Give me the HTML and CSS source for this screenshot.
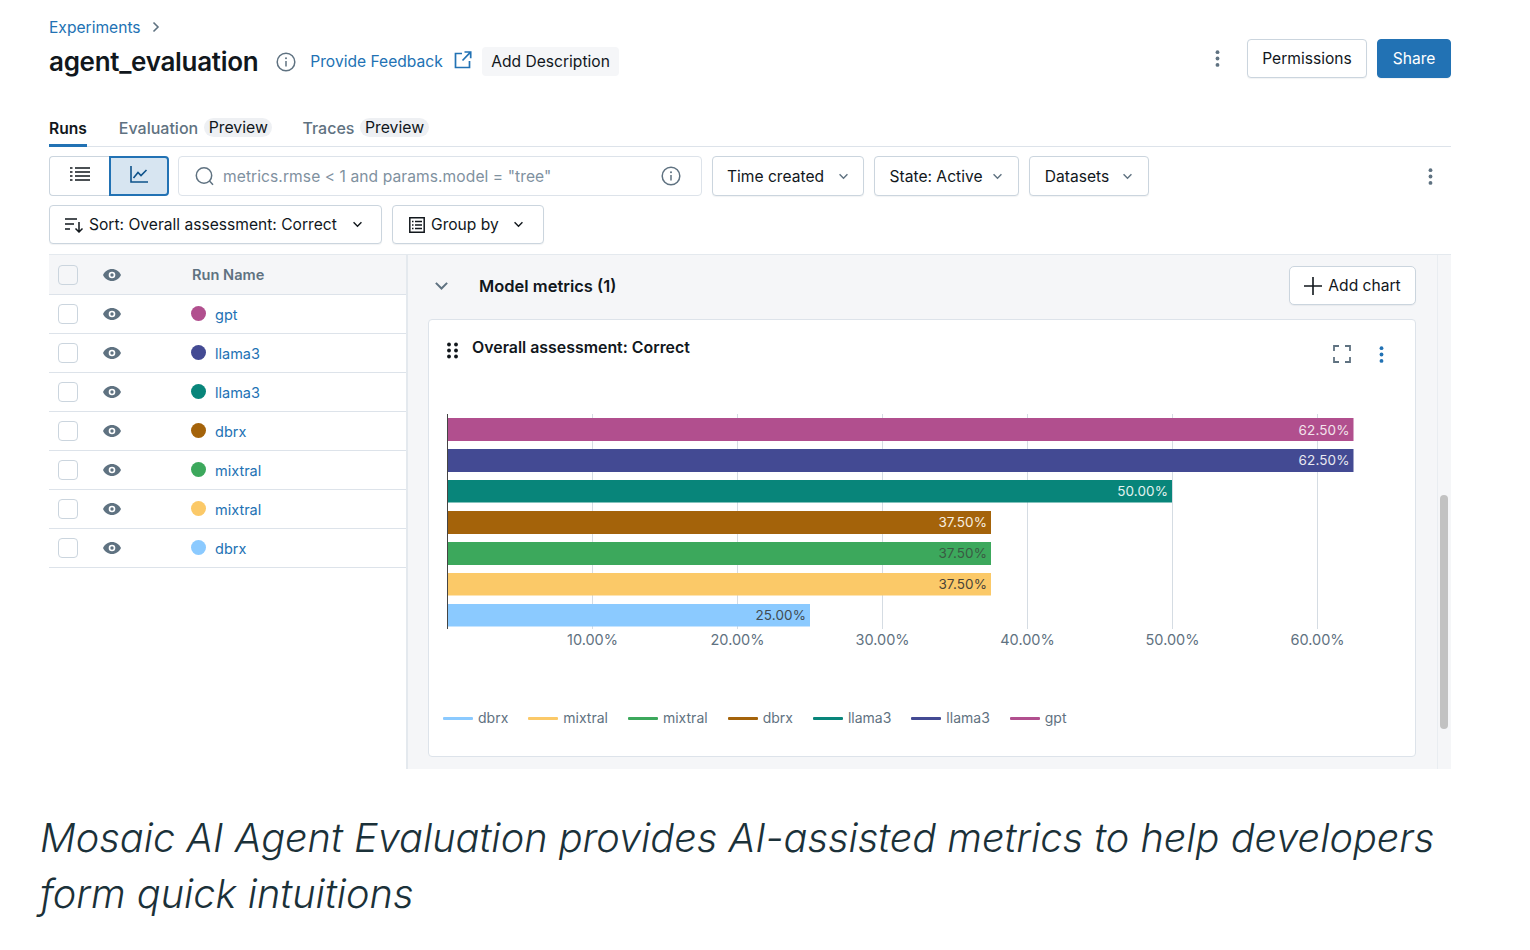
FILE: index.html
```html
<!DOCTYPE html>
<html lang="en">
<head>
<meta charset="utf-8">
<title>agent_evaluation</title>
<link rel="stylesheet" href="styles.css">
</head>
<body>
<svg class="defs" width="0" height="0" aria-hidden="true">
  <symbol id="eye" viewBox="0 0 18 12"><path d="M9 0C5 0 1.700 2.400 0 6c1.700 3.600 5 6 9 6s7.300-2.400 9-6c-1.700-3.600-5-6-9-6z" fill="#5f7281"/><circle cx="9" cy="6" r="3.300" fill="#fff"/><circle cx="9" cy="6" r="1.700" fill="#5f7281"/></symbol>
  <symbol id="chev" viewBox="0 0 12 8"><path d="M1.500 1.500 6 6l4.500-4.500" fill="none" stroke="currentColor" stroke-width="1.600"/></symbol>
  <symbol id="kebab" viewBox="0 0 4 16"><circle cx="2" cy="2" r="1.800"/><circle cx="2" cy="8" r="1.800"/><circle cx="2" cy="14" r="1.800"/></symbol>
  <symbol id="info" viewBox="0 0 20 20"><circle cx="10" cy="10" r="8.800" fill="none" stroke="#5f7281" stroke-width="1.500"/><circle cx="10" cy="6.200" r="1" fill="#5f7281"/><path d="M10 9v5.500" stroke="#5f7281" stroke-width="1.500"/></symbol>
</svg>

<div class="app">
  <nav class="crumbs"><a class="link">Experiments</a><svg class="crumb-chev" width="8" height="12" viewBox="0 0 8 12"><path d="M1.500 1.500 6 6l-4.500 4.500" fill="none" stroke="#5f7281" stroke-width="1.600"/></svg></nav>

  <header class="head">
    <h1 class="title">agent_evaluation</h1>
    <svg class="head-info" width="20" height="20"><use href="#info"/></svg>
    <a class="link feedback">Provide Feedback</a>
    <svg class="ext" width="18" height="18" viewBox="0 0 18 18"><path d="M8 2.500H1.500v14h14V10M10.500 1h6.200v6.200M16.500 1.200 8.500 9.500" fill="none" stroke="#2272b4" stroke-width="1.700"/></svg>
    <span class="add-desc">Add Description</span>
    <svg class="head-kebab" width="5" height="17" fill="#5f7281"><use href="#kebab"/></svg>
    <button class="btn perm">Permissions</button>
    <button class="btn share">Share</button>
  </header>

  <div class="tabs">
    <span class="tab active">Runs</span>
    <span class="tab">Evaluation <em class="pill">Preview</em></span>
    <span class="tab">Traces <em class="pill">Preview</em></span>
  </div>

  <div class="toolbar">
    <div class="toggle">
      <span class="toggle-item"><svg width="20" height="14" viewBox="0 0 20 14"><path d="M0 1h2.500M5 1h15M0 5h2.500M5 5h15M0 9h2.500M5 9h15M0 13h2.500M5 13h15" stroke="#11171c" stroke-width="1.500"/></svg></span>
      <span class="toggle-item on"><svg width="18" height="17" viewBox="0 0 18 17"><path d="M1 0v16h17M3.500 12 8 6.500l3 3L16.500 4" fill="none" stroke="#0e538b" stroke-width="1.600"/></svg></span>
    </div>
    <div class="search">
      <svg width="20" height="20" viewBox="0 0 20 20"><circle cx="9" cy="9.500" r="7.700" fill="none" stroke="#5f7281" stroke-width="1.500"/><path d="m14.500 15 3.500 3.800" stroke="#5f7281" stroke-width="1.500"/></svg>
      <span class="placeholder">metrics.rmse &lt; 1 and params.model = "tree"</span>
      <svg width="20" height="20"><use href="#info"/></svg>
    </div>
    <button class="btn select time">Time created<svg width="11" height="7" class="sel-chev"><use href="#chev"/></svg></button>
    <button class="btn select state">State: Active<svg width="11" height="7" class="sel-chev"><use href="#chev"/></svg></button>
    <button class="btn select data">Datasets<svg width="11" height="7" class="sel-chev"><use href="#chev"/></svg></button>
    <svg class="tool-kebab" width="5" height="17" fill="#5f7281"><use href="#kebab"/></svg>
  </div>

  <div class="toolbar second">
    <button class="btn select sort">
      <svg width="19" height="16" viewBox="0 0 19 16"><path d="M0 2h12M0 7h9M0 12h5M14 5v10M10.500 11.500 14 15l3.500-3.500" fill="none" stroke="#11171c" stroke-width="1.500"/></svg>
      Sort: Overall assessment: Correct<svg width="11" height="7" class="dark-chev"><use href="#chev"/></svg>
    </button>
    <button class="btn select group">
      <svg width="16" height="16" viewBox="0 0 16 16"><path d="M.8.800h14.400v14.400H.8zM3 4.500h1.500M6 4.500h7M3 8h1.500M6 8h7M3 11.500h1.500M6 11.500h7" fill="none" stroke="#11171c" stroke-width="1.500"/></svg>
      Group by<svg width="11" height="7" class="dark-chev"><use href="#chev"/></svg>
    </button>
  </div>

  <main class="main">
    <section class="runs">
      <div class="run-row run-head">
        <span class="check"></span><svg class="eye" width="18" height="12"><use href="#eye"/></svg><span class="run-title">Run Name</span>
      </div>
      <div class="run-row"><span class="check"></span><svg class="eye" width="18" height="12"><use href="#eye"/></svg><span class="dot" style="background:#b14f8e"></span><a class="link run-link">gpt</a></div>
      <div class="run-row"><span class="check"></span><svg class="eye" width="18" height="12"><use href="#eye"/></svg><span class="dot" style="background:#434a93"></span><a class="link run-link">llama3</a></div>
      <div class="run-row"><span class="check"></span><svg class="eye" width="18" height="12"><use href="#eye"/></svg><span class="dot" style="background:#08857a"></span><a class="link run-link">llama3</a></div>
      <div class="run-row"><span class="check"></span><svg class="eye" width="18" height="12"><use href="#eye"/></svg><span class="dot" style="background:#a4630a"></span><a class="link run-link">dbrx</a></div>
      <div class="run-row"><span class="check"></span><svg class="eye" width="18" height="12"><use href="#eye"/></svg><span class="dot" style="background:#3ca85c"></span><a class="link run-link">mixtral</a></div>
      <div class="run-row"><span class="check"></span><svg class="eye" width="18" height="12"><use href="#eye"/></svg><span class="dot" style="background:#fbc968"></span><a class="link run-link">mixtral</a></div>
      <div class="run-row"><span class="check"></span><svg class="eye" width="18" height="12"><use href="#eye"/></svg><span class="dot" style="background:#8bcaff"></span><a class="link run-link">dbrx</a></div>
    </section>

    <section class="charts">
      <div class="charts-body">
        <div class="metrics-head">
          <svg class="metrics-chev" width="15" height="10" viewBox="0 0 12 8"><use href="#chev"/></svg>
          <h2 class="metrics-title">Model metrics (1)</h2>
          <button class="btn add"><svg width="18" height="18" viewBox="0 0 18 18"><path d="M9 0v18M0 9h18" stroke="#11171c" stroke-width="1.600"/></svg>Add chart</button>
        </div>
        <article class="card">
          <div class="card-head">
            <svg class="grip" width="11" height="17" viewBox="0 0 11 17" fill="#11171c"><circle cx="2" cy="2.500" r="1.900"/><circle cx="9" cy="2.500" r="1.900"/><circle cx="2" cy="8.500" r="1.900"/><circle cx="9" cy="8.500" r="1.900"/><circle cx="2" cy="14.500" r="1.900"/><circle cx="9" cy="14.500" r="1.900"/></svg>
            <h3 class="card-title">Overall assessment: Correct</h3>
            <svg class="expand" width="18" height="18" viewBox="0 0 18 18"><path d="M1 6V1h5M12 1h5v5M1 12v5h5M12 17h5v-5" fill="none" stroke="#5f7281" stroke-width="1.800"/></svg>
            <svg class="card-kebab" width="5" height="17" fill="#2272b4"><use href="#kebab"/></svg>
          </div>
          <svg class="chart" width="986" height="250" viewBox="429 405 986 250">
            <g class="grid">
              <path d="M592.500 414v215M737.500 414v215M882.500 414v215M1027.500 414v215M1172.500 414v215M1317.500 414v215"/>
            </g>
            <rect x="448" y="418" width="905.500" height="23" fill="#b14f8e"/>
            <rect x="448" y="449" width="905.500" height="23" fill="#434a93"/>
            <rect x="448" y="480" width="724" height="22.500" fill="#08857a"/>
            <rect x="448" y="511" width="543" height="23" fill="#a4630a"/>
            <rect x="448" y="542" width="543" height="23" fill="#3ca85c"/>
            <rect x="448" y="573" width="543" height="22.500" fill="#fbc968"/>
            <rect x="448" y="604" width="362" height="22.500" fill="#8bcaff"/>
            <path class="axis" d="M447.500 414v215"/>
            <g class="bar-label">
              <text x="1349.500" y="435" fill="#f3e3ec">62.50%</text>
              <text x="1349.500" y="465" fill="#e8e9f2">62.50%</text>
              <text x="1168" y="496" fill="#e3f2f0">50.00%</text>
              <text x="987" y="527" fill="#f8efe0">37.50%</text>
              <text x="987" y="558" fill="#3a5a43">37.50%</text>
              <text x="987" y="589" fill="#4a4438">37.50%</text>
              <text x="806" y="620" fill="#3f4a52">25.00%</text>
            </g>
            <g class="tick">
              <text x="592.500" y="645">10.00%</text>
              <text x="737.500" y="645">20.00%</text>
              <text x="882.500" y="645">30.00%</text>
              <text x="1027.500" y="645">40.00%</text>
              <text x="1172.500" y="645">50.00%</text>
              <text x="1317.500" y="645">60.00%</text>
            </g>
          </svg>
          <ul class="legend">
            <li class="legend-item"><i class="swatch" style="background:#8bcaff"></i>dbrx</li>
            <li class="legend-item"><i class="swatch" style="background:#fbc968"></i>mixtral</li>
            <li class="legend-item"><i class="swatch" style="background:#3ca85c"></i>mixtral</li>
            <li class="legend-item"><i class="swatch" style="background:#a4630a"></i>dbrx</li>
            <li class="legend-item"><i class="swatch" style="background:#08857a"></i>llama3</li>
            <li class="legend-item"><i class="swatch" style="background:#434a93"></i>llama3</li>
            <li class="legend-item"><i class="swatch" style="background:#b14f8e"></i>gpt</li>
          </ul>
        </article>
      </div>
      <div class="scroll"><span class="thumb"></span></div>
    </section>
  </main>
</div>

<p class="caption">Mosaic AI Agent Evaluation provides AI-assisted metrics to help developers form quick intuitions</p>
</body>
</html>
```
FILE: styles.css
```css
* { box-sizing: border-box; }
html, body { margin: 0; padding: 0; }
body { background: #fff; color: #11171c; font-family: Inter, "Liberation Sans", sans-serif; font-size: 15.600px; width: 1530px; height: 950px; overflow: hidden; }
.defs { position: absolute; }
svg { display: block; flex: none; }
.app { margin-left: 49px; width: 1402px; }
.link { color: #2272b4; }

.crumbs { display: flex; align-items: center; height: 18px; margin-top: 18px; gap: 11px; }
.crumb-chev { margin-top: -1px; }

.head { display: flex; align-items: center; height: 40px; margin-top: 6px; }
.title { margin: 0; font-size: 26px; font-weight: 600; letter-spacing: -.3px; line-height: 40px; color: #11171c; }
.head-info { margin-left: 18px; margin-top: -1px; }
.feedback { margin-left: 14px; margin-top: -1px; }
.ext { margin-left: 11px; margin-top: -5px; }
.add-desc { margin-left: 10px; height: 29px; line-height: 29px; padding: 0 9.500px; background: #f5f6f8; border-radius: 4px; margin-top: -2px; }
.head-kebab { margin-left: auto; margin-right: 27px; margin-top: -8px; }

.btn { font: inherit; color: #11171c; background: #fff; border: 1px solid #cbd5de; border-radius: 4px; height: 39px; padding: 0; display: flex; align-items: center; justify-content: center; box-shadow: 0 1px 1px rgba(30, 50, 70, .06); }
.perm { width: 120px; margin-top: -8px; }
.share { width: 74px; margin-left: 10px; margin-top: -8px; background: #2272b4; border-color: #2272b4; color: #fff; }

.tabs { display: flex; align-items: flex-end; height: 40px; margin-top: 25px; gap: 32px; border-bottom: 1px solid #dde3ea; font-size: 16px; }
.tab { display: flex; align-items: center; gap: 6px; height: 28px; padding-bottom: 9px; color: #5f7281; font-weight: 500; }
.tab:last-child { margin-left: -2px; }
.tab.active { color: #11171c; font-weight: 600; font-size: 15.600px; border-bottom: 3px solid #2272b4; margin-bottom: -1px; height: 29px; padding-bottom: 6px; }
.pill { font-style: normal; font-weight: 400; font-size: 15.800px; color: #11171c; background: #eef0f3; border-radius: 10px; padding: 0 4.500px; line-height: 19px; }

.toolbar { display: flex; align-items: center; height: 40px; margin-top: 9px; position: relative; }
.toolbar.second { margin-top: 9px; height: 39px; gap: 10px; }
.toggle { display: flex; width: 120px; height: 40px; }
.toggle-item { flex: 0 0 60px; display: flex; align-items: center; justify-content: center; border: 1px solid #cbd5de; border-right: 0; border-radius: 4px 0 0 4px; padding-bottom: 4px; }
.toggle-item.on { background: #d7e5f1; border: 2px solid #2272b4; border-radius: 0 4px 4px 0; }
.search { display: flex; align-items: center; width: 524px; height: 40px; margin-left: 9px; border: 1px solid #dde3ea; border-radius: 4px; padding: 0 20px 0 16px; }
.placeholder { flex: 1; margin-left: 8px; color: #7f919f; letter-spacing: .07px; }
.select { height: 40px; }
.time { width: 152px; margin-left: 10px; }
.state { width: 145px; margin-left: 10px; }
.data { width: 120px; margin-left: 10px; }
.sel-chev { margin-left: 14px; color: #5f7281; }
.state .sel-chev { margin-left: 10px; }
.data .sel-chev { margin-left: 13px; }
.dark-chev { margin-left: 15px; color: #11171c; }
.tool-kebab { margin-left: auto; margin-right: 18px; }
.sort { width: 333px; height: 39px; justify-content: flex-start; padding-left: 15px; gap: 5px; }
.sort .dark-chev { margin-left: 10px; }
.group { width: 152px; height: 39px; justify-content: flex-start; padding-left: 16px; gap: 6px; }
.group .dark-chev { margin-left: 8px; }

.main { display: flex; height: 515px; margin-top: 10px; border-top: 1px solid #e4e9ee; }
.runs { width: 359px; border-right: 2px solid #e4e9ee; font-size: 14.500px; }
.run-row { display: flex; align-items: center; height: 39px; border-bottom: 1px solid #dde3ea; color: #5f7281; }
.run-head { height: 40px; background: #f5f6f8; font-weight: 600; }
.check { width: 20px; height: 20px; margin-left: 9px; border: 1px solid #cbd5de; border-radius: 4px; background: #fff; }
.run-head .check { background: #f5f6f8; }
.eye { margin-left: 25px; }
.run-title { margin-left: 71px; font-size: 14.600px; }
.dot { width: 15px; height: 15px; margin-left: 70px; border-radius: 50%; margin-top: -2px; }
.run-link { margin-left: 9px; }

.charts { flex: 1; display: flex; background: #f5f6f8; }
.charts-body { width: 1029px; padding-left: 20px; }
.metrics-head { display: flex; align-items: center; height: 64px; padding-bottom: 3px; padding-right: 21px; }
.metrics-chev { margin-left: 6px; color: #5f7281; }
.metrics-title { margin: 0 0 0 30px; font-size: 16.500px; font-weight: 600; flex: 1; }
.add { width: 127px; height: 39px; gap: 6px; border-radius: 5px; }
.card { width: 988px; height: 438px; background: #fff; border: 1px solid #dde3ea; border-radius: 4px; }
.card-head { display: flex; align-items: flex-start; height: 85px; padding: 21px 31px 0 18px; }
.grip { margin-top: 1px; }
.card-title { margin: -3px 0 0 14px; font-size: 15.900px; font-weight: 600; flex: 1; line-height: 20px; }
.expand { margin-top: 4px; }
.card-kebab { margin: 5px 0 0 28px; }
.chart { height: 250px; }
.grid path { stroke: #d5dce3; stroke-width: 1; fill: none; }
.axis { stroke: #444; stroke-width: 1; fill: none; }
.bar-label text { font-size: 13.500px; text-anchor: end; letter-spacing: .1px; }
.tick text { font-size: 14.500px; text-anchor: middle; fill: #5f7281; }
.legend { display: flex; list-style: none; margin: 53px 0 0 14px; padding: 0; gap: 20px; color: #5f7281; font-size: 14px; line-height: 20px; }
.legend-item { display: flex; align-items: center; gap: 5px; }
.swatch { width: 30px; height: 3px; border-radius: 1px; }

.scroll { flex: 1; border-left: 1px solid #e9edf1; position: relative; }
.thumb { position: absolute; left: 2px; top: 240px; width: 8px; height: 234px; border-radius: 4px; background: #c2c2c2; }

.caption { margin: 41px 0 0; padding: 0 40px; width: 1480px; font-family: Inter, "Noto Sans", sans-serif; font-weight: 300; font-style: italic; font-size: 39.700px; line-height: 56px; color: #1b3139; }
```
